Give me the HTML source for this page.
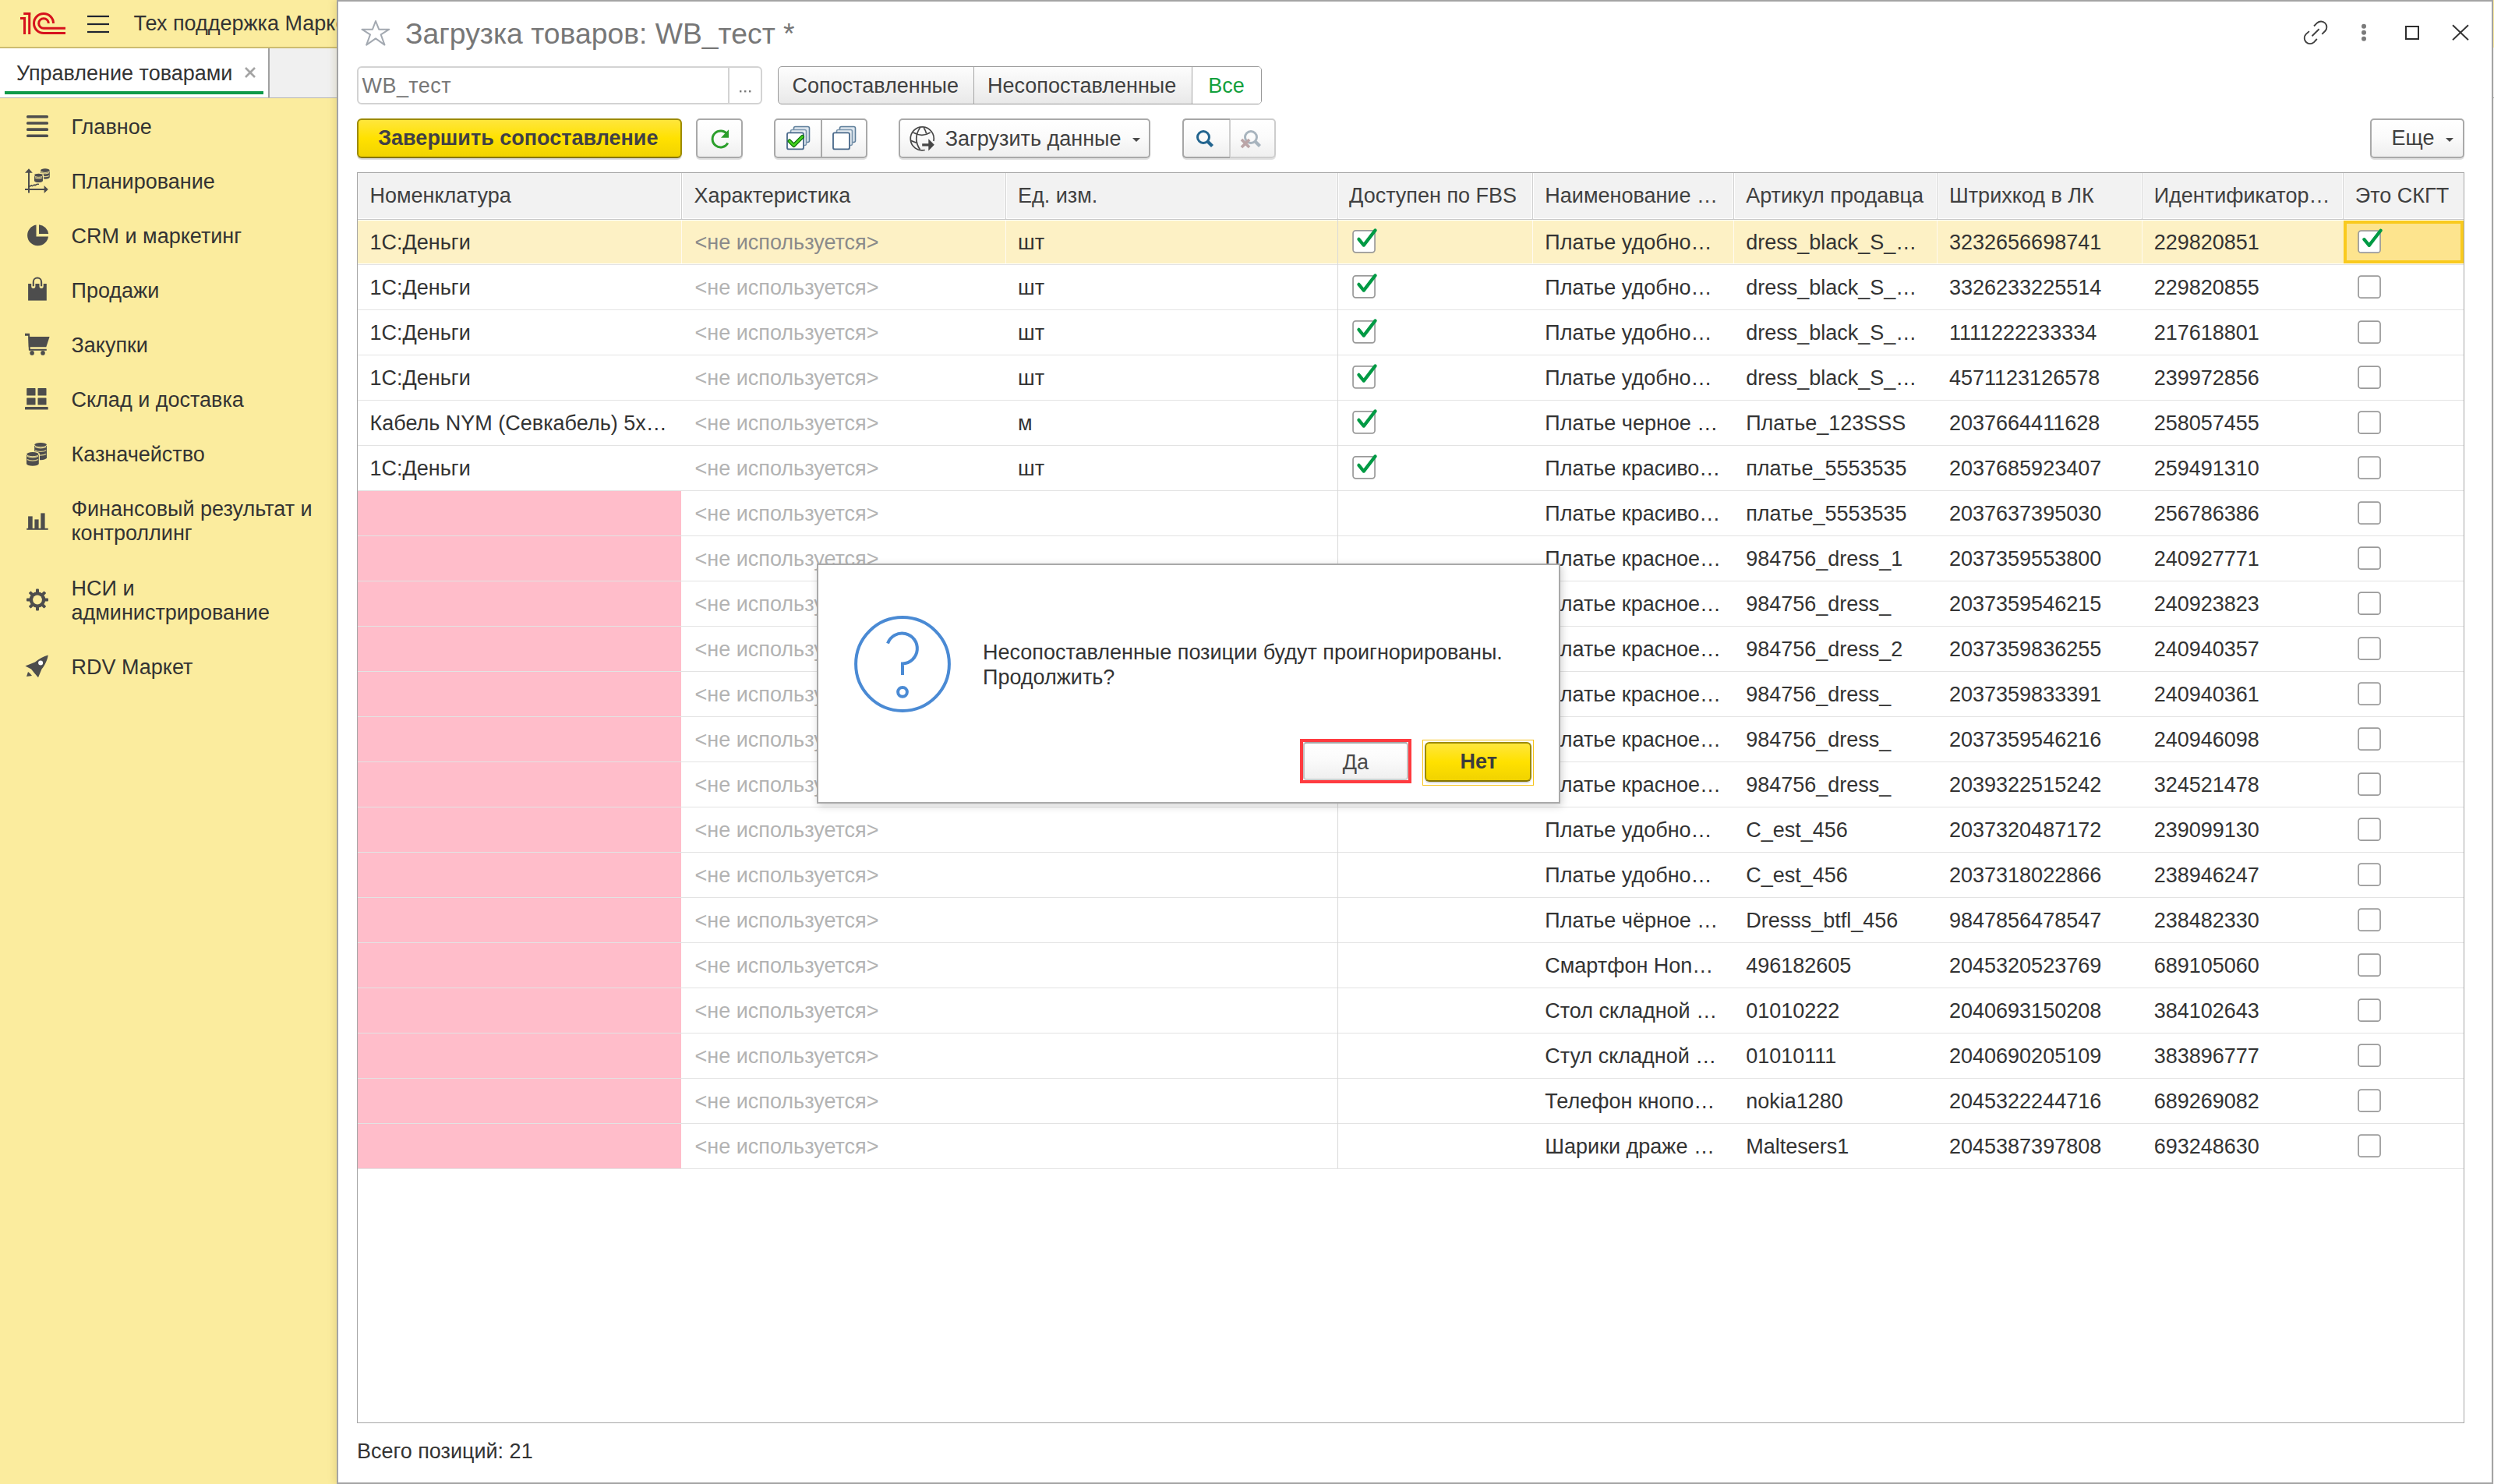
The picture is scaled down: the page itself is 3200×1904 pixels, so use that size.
<!DOCTYPE html><html><head><meta charset="utf-8"><style>
*{box-sizing:border-box;margin:0;padding:0}
html,body{width:3200px;height:1904px;overflow:hidden}
body{position:relative;background:#FBEC9E;font-family:"Liberation Sans",sans-serif;color:#333}
.t{position:absolute;white-space:nowrap}
.abs{position:absolute}
svg{position:absolute;overflow:visible}
.btn{position:absolute;border:2px solid #a9a9a9;border-radius:5px;background:linear-gradient(#ffffff 0%,#fbfbfb 45%,#efefef 100%);box-shadow:0 2px 0 rgba(0,0,0,0.12)}
.ybtn{position:absolute;border:2px solid #9c8a00;border-bottom-color:#857400;border-radius:6px;background:linear-gradient(#ffe63c 0%,#ffe100 50%,#f1d300 100%);box-shadow:0 2px 1px rgba(0,0,0,0.15)}
</style></head><body>
<div class="abs" style="left:0;top:60px;width:432px;height:2px;background:#cdbc70"></div>
<svg style="left:0;top:0" width="160" height="60" viewBox="0 0 160 60">
<g fill="#d6121d">
<rect x="26" y="22" width="7" height="3"/><rect x="30" y="22" width="3" height="22"/>
<rect x="30.2" y="16" width="9" height="3"/><rect x="36.2" y="16" width="3" height="28"/>
</g>
<g fill="none" stroke="#d6121d" stroke-width="3">
<path d="M68.5 30 A12.5 12.5 0 1 0 56 42.5 H84"/>
<path d="M62.3 30 A6.3 6.3 0 1 0 56 36.3 H84"/>
</g>
<g stroke="#1f2430" stroke-width="2.2">
<line x1="112" y1="21" x2="140" y2="21"/><line x1="112" y1="31" x2="140" y2="31"/><line x1="112" y1="41" x2="140" y2="41"/>
</g>
</svg>
<div class="t" style="left:171.50px;top:15.34px;font-size:27px;line-height:31px;color:#333;font-weight:normal;">Тех поддержка Маркетплейсы</div>
<div class="abs" style="left:0;top:62px;width:432px;height:64px;background:#f0f0f0;border-bottom:1px solid #b4b4b4"></div>
<div class="abs" style="left:0;top:62px;width:346px;height:63px;background:#fff;border-right:2px solid #a0a0a0"></div>
<div class="abs" style="left:6px;top:117px;width:332px;height:4px;background:#0f9a49"></div>
<div class="t" style="left:21.00px;top:79.24px;font-size:27px;line-height:31px;color:#333;font-weight:normal;">Управление товарами</div>
<svg style="left:313px;top:85px" width="16" height="16"><g stroke="#a4a4a4" stroke-width="2.6"><line x1="2" y1="2" x2="14" y2="14"/><line x1="14" y1="2" x2="2" y2="14"/></g></svg>
<div class="t" style="left:91.50px;top:147.54px;font-size:27px;line-height:31px;color:#333;font-weight:normal;">Главное</div>
<div class="t" style="left:91.50px;top:217.84px;font-size:27px;line-height:31px;color:#333;font-weight:normal;">Планирование</div>
<div class="t" style="left:91.50px;top:287.84px;font-size:27px;line-height:31px;color:#333;font-weight:normal;">CRM и маркетинг</div>
<div class="t" style="left:91.50px;top:358.24px;font-size:27px;line-height:31px;color:#333;font-weight:normal;">Продажи</div>
<div class="t" style="left:91.50px;top:427.84px;font-size:27px;line-height:31px;color:#333;font-weight:normal;">Закупки</div>
<div class="t" style="left:91.50px;top:498.24px;font-size:27px;line-height:31px;color:#333;font-weight:normal;">Склад и доставка</div>
<div class="t" style="left:91.50px;top:567.64px;font-size:27px;line-height:31px;color:#333;font-weight:normal;">Казначейство</div>
<div class="t" style="left:91.50px;top:637.54px;font-size:27px;line-height:31px;color:#333;font-weight:normal;">Финансовый результат и</div>
<div class="t" style="left:91.50px;top:668.54px;font-size:27px;line-height:31px;color:#333;font-weight:normal;">контроллинг</div>
<div class="t" style="left:91.50px;top:739.64px;font-size:27px;line-height:31px;color:#333;font-weight:normal;">НСИ и</div>
<div class="t" style="left:91.50px;top:770.64px;font-size:27px;line-height:31px;color:#333;font-weight:normal;">администрирование</div>
<div class="t" style="left:91.50px;top:841.24px;font-size:27px;line-height:31px;color:#333;font-weight:normal;">RDV Маркет</div>
<svg style="left:0;top:0" width="80" height="900">
<g fill="#4d4d4d">
<rect x="34" y="148" width="28" height="3.6" rx="1.5"/><rect x="34" y="156.2" width="28" height="3.6" rx="1.5"/>
<rect x="34" y="164.3" width="28" height="3.6" rx="1.5"/><rect x="34" y="172.4" width="28" height="3.6" rx="1.5"/>
</g>
<g stroke="#4d4d4d" stroke-width="2" fill="none">
<path d="M37 247.5 V220.5 M32 243 H57.5"/><path d="M37.8 239.2 l2.6 -1.2 l1 0.6 l2.6 -1.5 l1 0.6 l2.6 -1.5 h2.4" stroke-width="1.6"/>
</g>
<g fill="#4d4d4d">
<path d="M32 221.8 L37 216.2 L41.8 221.8 Z"/><path d="M56.6 238 L61.8 243 L56.6 248 Z"/>
</g>
<path d="M52.0 218.8 A5.9 2.6 0 0 1 63.8 218.8 V227.20000000000002 A5.9 2.6 0 0 1 52.0 227.20000000000002 Z" fill="#4d4d4d"/><path d="M52.0 218.8 A5.9 2.6 0 0 0 63.8 218.8" fill="none" stroke="#FBEC9E" stroke-width="0.9"/><path d="M52.8 221.5 A5.9 2.6 0 0 0 63.0 221.5" fill="none" stroke="#d9cc8a" stroke-width="1.3"/><path d="M52.8 225.4 A5.9 2.6 0 0 0 63.0 225.4" fill="none" stroke="#d9cc8a" stroke-width="1.3"/><path d="M44.0 225 A5.5 2.3 0 0 1 55.0 225 V231.8 A5.5 2.3 0 0 1 44.0 231.8 Z" fill="none" stroke="#FBEC9E" stroke-width="2.4"/><path d="M44.0 225 A5.5 2.3 0 0 1 55.0 225 V231.8 A5.5 2.3 0 0 1 44.0 231.8 Z" fill="#4d4d4d"/><path d="M44.0 225 A5.5 2.3 0 0 0 55.0 225" fill="none" stroke="#FBEC9E" stroke-width="0.9"/><path d="M44.8 227.79999999999998 A5.5 2.3 0 0 0 54.2 227.79999999999998" fill="none" stroke="#d9cc8a" stroke-width="1.3"/>
<g fill="#4d4d4d">
<path d="M46.5 288.5 A13.5 13.5 0 1 0 62 303.5 H46.5 Z"/>
<path d="M50 288.2 A13.5 13.5 0 0 1 62.2 300 H50 Z"/>
</g>
<rect x="36.1" y="364" width="23.7" height="21.6" fill="#4d4d4d"/>
<path d="M42.8 367.3 V361.7 A5.15 5.15 0 0 1 53.1 361.7 V367.3" stroke="#FBEC9E" stroke-width="5.2" fill="none" stroke-linecap="round"/>
<path d="M42.8 367.3 V361.7 A5.15 5.15 0 0 1 53.1 361.7 V367.3" stroke="#4d4d4d" stroke-width="2.1" fill="none"/>
<g fill="#4d4d4d">
<rect x="32" y="427.8" width="5.9" height="3"/><path d="M36 428 h2 l0.9 21.6 h-2 z"/>
<path d="M36.6 432.1 H63.6 L59.3 445.3 H36.8 Z"/><rect x="37.5" y="447.8" width="22.3" height="2"/>
<circle cx="41.1" cy="452.9" r="2.8"/><circle cx="55" cy="452.9" r="2.8"/>
</g>
<g fill="#4d4d4d">
<rect x="34.2" y="498.1" width="11.3" height="9.4" rx="0.6"/><rect x="48.5" y="498.1" width="11" height="9.4" rx="0.6"/>
<rect x="34.2" y="510.5" width="11.3" height="9.1" rx="0.6"/><rect x="48.5" y="510.5" width="11" height="9.1" rx="0.6"/>
<rect x="32" y="522.1" width="29.7" height="3.5" rx="0.6"/>
</g>
<path d="M44.2 570.8 A7.9 2.9 0 0 1 60.0 570.8 V587.3 A7.9 2.9 0 0 1 44.2 587.3 Z" fill="#4d4d4d"/><path d="M44.2 570.8 A7.9 2.9 0 0 0 60.0 570.8" fill="none" stroke="#FBEC9E" stroke-width="0.9"/><path d="M45.0 573.2 A7.9 2.9 0 0 0 59.2 573.2" fill="none" stroke="#d9cc8a" stroke-width="1.3"/><path d="M45.0 577.8000000000001 A7.9 2.9 0 0 0 59.2 577.8000000000001" fill="none" stroke="#d9cc8a" stroke-width="1.3"/><path d="M45.0 582.5000000000001 A7.9 2.9 0 0 0 59.2 582.5000000000001" fill="none" stroke="#d9cc8a" stroke-width="1.3"/><path d="M34.0 582.9 A7.9 2.8 0 0 1 49.8 582.9 V594.9 A7.9 2.8 0 0 1 34.0 594.9 Z" fill="none" stroke="#FBEC9E" stroke-width="2.4"/><path d="M34.0 582.9 A7.9 2.8 0 0 1 49.8 582.9 V594.9 A7.9 2.8 0 0 1 34.0 594.9 Z" fill="#4d4d4d"/><path d="M34.0 582.9 A7.9 2.8 0 0 0 49.8 582.9" fill="none" stroke="#FBEC9E" stroke-width="0.9"/><path d="M34.8 585.2 A7.9 2.8 0 0 0 49.0 585.2" fill="none" stroke="#d9cc8a" stroke-width="1.3"/><path d="M34.8 589.5000000000001 A7.9 2.8 0 0 0 49.0 589.5000000000001" fill="none" stroke="#d9cc8a" stroke-width="1.3"/>
<g fill="#4d4d4d">
<rect x="36.1" y="662.4" width="5.6" height="16"/><rect x="44.4" y="666.4" width="5.2" height="12"/><rect x="52.3" y="658.4" width="5.3" height="20"/>
<rect x="34.2" y="677.8" width="27.5" height="2"/>
</g>
<g transform="translate(48,769.5)" fill="#4d4d4d"><circle r="10.3"/><rect x="-2" y="-14" width="4" height="6" rx="1" transform="rotate(0)"/><rect x="-2" y="-14" width="4" height="6" rx="1" transform="rotate(45)"/><rect x="-2" y="-14" width="4" height="6" rx="1" transform="rotate(90)"/><rect x="-2" y="-14" width="4" height="6" rx="1" transform="rotate(135)"/><rect x="-2" y="-14" width="4" height="6" rx="1" transform="rotate(180)"/><rect x="-2" y="-14" width="4" height="6" rx="1" transform="rotate(225)"/><rect x="-2" y="-14" width="4" height="6" rx="1" transform="rotate(270)"/><rect x="-2" y="-14" width="4" height="6" rx="1" transform="rotate(315)"/><circle r="5.9" fill="#FBEC9E"/></g>
<g fill="#4d4d4d">
<path d="M61.7 840.4 C56 842 50 845 45 849.5 L32.4 854.4 L40 858.5 L44.5 864 L49 869.3 L53.5 858.5 C58 853 61 846 61.7 840.4 Z"/>
<path d="M34 868 l2 -6 l2.5 2 l2.5 3 z"/>
</g>
<circle cx="52.1" cy="850.5" r="3" fill="#fff"/>
</svg>
<div class="abs" style="left:3197px;top:61px;width:3px;height:1843px;background:#f4f4f4"></div>
<div class="abs" style="left:3197px;top:125px;width:3px;height:1px;background:#a0a0a0"></div>
<div class="abs" style="left:432px;top:0;width:2767px;height:1904px;background:#fff;border:2px solid #a4a4a4;box-shadow:-4px 0 8px rgba(120,100,0,0.12)"></div>
<svg style="left:0;top:0" width="520" height="70"><path d="M482 27 L486.2 37.7 L499.3 37.7 L488.7 44.3 L493.5 57.6 L482 49.4 L470.2 57.6 L475 44.3 L464.4 37.7 L478 37.7 Z" fill="none" stroke="#a3a9b1" stroke-width="2" stroke-linejoin="round"/></svg>
<div class="t" style="left:520.00px;top:21.58px;font-size:37.3px;line-height:43px;color:#777;font-weight:normal;">Загрузка товаров: WB_тест *</div>
<svg style="left:2940px;top:15px" width="240" height="50" viewBox="2940 15 240 50">
<g fill="none" stroke="#404040" stroke-width="1.9">
<path d="M2969 33.5 L2973.04 29.44 A7.3 7.3 0 0 1 2983.36 39.76 L2979.3 43.9"/>
<path d="M2966.5 46.3 L2975.6 37.3"/>
<path d="M2962.9 40.1 L2958.74 43.84 A7.3 7.3 0 0 0 2969.06 54.16 L2972.8 50"/>
</g>
<g fill="#7a7a7a"><circle cx="3033" cy="33.8" r="3"/><circle cx="3033" cy="41.8" r="3"/><circle cx="3033" cy="49.8" r="3"/></g>
<rect x="3087" y="34" width="16" height="16" fill="none" stroke="#2e2e2e" stroke-width="2"/>
<g stroke="#333" stroke-width="1.9"><line x1="3147" y1="32.3" x2="3167" y2="51.2"/><line x1="3167" y1="32.3" x2="3147" y2="51.2"/></g>
</svg>
<div class="abs" style="left:458px;top:85px;width:520px;height:49px;border:2px solid #d3d3d3;border-radius:6px;background:#fff"></div>
<div class="abs" style="left:934px;top:86px;width:2px;height:47px;background:#d3d3d3"></div>
<div class="t" style="left:464.50px;top:94.84px;font-size:27px;line-height:31px;color:#777;font-weight:normal;letter-spacing:0.45px">WB_тест</div>
<svg style="left:945px;top:110px" width="24" height="10"><g fill="#7a7a7a"><rect x="4" y="6" width="2.4" height="2.4"/><rect x="10" y="6" width="2.4" height="2.4"/><rect x="16" y="6" width="2.4" height="2.4"/></g></svg>
<div class="abs" style="left:998px;top:85px;width:621px;height:49px;border:1px solid #999;border-radius:5px;background:linear-gradient(#fdfdfd,#e9e9e9);overflow:hidden"><div class="abs" style="left:530px;top:0;width:90px;height:47px;background:#fff"></div><div class="abs" style="left:250px;top:0;width:1px;height:47px;background:#a6a6a6"></div><div class="abs" style="left:530px;top:0;width:1px;height:47px;background:#a6a6a6"></div></div>
<div class="t" style="left:1016.50px;top:94.94px;font-size:27px;line-height:31px;color:#404040;font-weight:normal;">Сопоставленные</div>
<div class="t" style="left:1267.00px;top:94.94px;font-size:27px;line-height:31px;color:#404040;font-weight:normal;">Несопоставленные</div>
<div class="t" style="left:1550.20px;top:94.94px;font-size:27px;line-height:31px;color:#12a03c;font-weight:normal;">Все</div>
<div class="ybtn" style="left:458px;top:152px;width:417px;height:51px"></div>
<div class="t" style="left:485.20px;top:161.84px;font-size:27px;line-height:31px;color:#3f3f46;font-weight:bold;">Завершить сопоставление</div>
<div class="btn" style="left:893px;top:152px;width:60px;height:51px"></div>
<svg style="left:900px;top:155px" width="50" height="45" viewBox="900 155 50 45">
<path d="M933.3 172.5 A10.5 10.5 0 1 0 933.8 183.5" fill="none" stroke="#2c9f2c" stroke-width="3"/>
<path d="M935 166.2 L935 176.8 L925 176.8 Z" fill="#2c9f2c"/>
</svg>
<div class="btn" style="left:993px;top:152px;width:120px;height:51px"></div>
<div class="abs" style="left:1053px;top:154px;width:2px;height:47px;background:#a9a9a9"></div>
<svg style="left:990px;top:150px" width="130" height="55" viewBox="990 150 130 55"><rect x="1018.5" y="162.5" width="20" height="20" rx="2" fill="#dde6ee" stroke="#5d7d99" stroke-width="1.6"/><rect x="1014.5" y="166.5" width="20" height="20" rx="2" fill="#e8eef3" stroke="#7a95ad" stroke-width="1.6"/><rect x="1010" y="170.4" width="21" height="21" rx="2" fill="#fff" stroke="#48688a" stroke-width="1.8"/><path d="M1013 181 l5.5 5.5 l11 -11" fill="none" stroke="#0b6b0b" stroke-width="5" stroke-linejoin="round" stroke-linecap="round"/><path d="M1013 181 l5.5 5.5 l11 -11" fill="none" stroke="#43d11f" stroke-width="2.6" stroke-linejoin="round" stroke-linecap="round"/><rect x="1077.5" y="162.5" width="20" height="20" rx="2" fill="#dde6ee" stroke="#5d7d99" stroke-width="1.6"/><rect x="1073.5" y="166.5" width="20" height="20" rx="2" fill="#e8eef3" stroke="#7a95ad" stroke-width="1.6"/><rect x="1069" y="170.4" width="21" height="21" rx="2" fill="#fff" stroke="#48688a" stroke-width="1.8"/></svg>
<div class="btn" style="left:1153px;top:152px;width:323px;height:51px"></div>
<svg style="left:1160px;top:155px" width="50" height="45" viewBox="1160 155 50 45">
<g fill="none" stroke="#474747" stroke-width="1.7">
<path d="M1186.7 192.5 A15 15 0 1 1 1197.9 181"/>
<path d="M1171.6 170.1 Q1183 176.5 1193.7 170.1"/>
<path d="M1180.5 163.9 Q1171 178 1180.5 192"/>
<path d="M1185.3 163.9 Q1187.5 167 1188.6 171.2"/>
<path d="M1168.6 180.4 L1175.9 183.3"/>
</g>
<path d="M1183.2 184.3 H1191.3 V178.2 L1198.8 185.8 L1191.3 193.6 V187.6 H1183.2 Z" fill="#474747"/>
</svg>
<div class="t" style="left:1212.70px;top:162.94px;font-size:27px;line-height:31px;color:#404040;font-weight:normal;">Загрузить данные</div>
<svg style="left:1450px;top:174px" width="16" height="10"><path d="M3 3 h10 l-5 5z" fill="#4a4a4a"/></svg>
<div class="btn" style="left:1517px;top:152px;width:120px;height:51px;border-color:#cdcdcd"></div>
<div class="abs" style="left:1517px;top:152px;width:61px;height:51px;border:2px solid #a6a6a6;border-right:none;border-radius:5px 0 0 5px"></div>
<div class="abs" style="left:1577px;top:154px;width:2px;height:47px;background:#cfcfcf"></div>
<svg style="left:1520px;top:155px" width="110" height="45" viewBox="1520 155 110 45">
<circle cx="1544" cy="176" r="7.5" fill="none" stroke="#23658f" stroke-width="3"/>
<path d="M1549 181 L1555.5 187.5" stroke="#23658f" stroke-width="4.2"/>
<circle cx="1605" cy="176" r="7.5" fill="none" stroke="#a8b4be" stroke-width="3"/>
<path d="M1610 181 L1616.5 187.5" stroke="#a8b4be" stroke-width="4.2"/>
<path d="M1593 179 L1603 189 M1603 179 L1593 189" stroke="#bba5a7" stroke-width="3.8"/>
</svg>
<div class="btn" style="left:3041px;top:152px;width:121px;height:51px"></div>
<div class="t" style="left:3068.50px;top:161.84px;font-size:27px;line-height:31px;color:#404040;font-weight:normal;">Еще</div>
<svg style="left:3135px;top:174px" width="16" height="10"><path d="M3 3 h10 l-5 5z" fill="#4a4a4a"/></svg>
<div class="abs" style="left:458px;top:221px;width:2704px;height:1605px;border:1px solid #a6a6a6;background:#fff"></div>
<div class="abs" style="left:459px;top:222px;width:2702px;height:59px;background:#f2f2f2"></div>
<div class="abs" style="left:459px;top:280px;width:2702px;height:3px;background:#fff;border-top:0;"></div>
<div class="abs" style="left:873px;top:222px;width:3px;height:58px;background:#fff"></div>
<div class="abs" style="left:874px;top:222px;width:1px;height:59px;background:#cfcfcf"></div>
<div class="abs" style="left:1289px;top:222px;width:3px;height:58px;background:#fff"></div>
<div class="abs" style="left:1290px;top:222px;width:1px;height:59px;background:#cfcfcf"></div>
<div class="abs" style="left:1715px;top:222px;width:3px;height:58px;background:#fff"></div>
<div class="abs" style="left:1716px;top:222px;width:1px;height:59px;background:#cfcfcf"></div>
<div class="abs" style="left:1965px;top:222px;width:3px;height:58px;background:#fff"></div>
<div class="abs" style="left:1966px;top:222px;width:1px;height:59px;background:#cfcfcf"></div>
<div class="abs" style="left:2223px;top:222px;width:3px;height:58px;background:#fff"></div>
<div class="abs" style="left:2224px;top:222px;width:1px;height:59px;background:#cfcfcf"></div>
<div class="abs" style="left:2484px;top:222px;width:3px;height:58px;background:#fff"></div>
<div class="abs" style="left:2485px;top:222px;width:1px;height:59px;background:#cfcfcf"></div>
<div class="abs" style="left:2747px;top:222px;width:3px;height:58px;background:#fff"></div>
<div class="abs" style="left:2748px;top:222px;width:1px;height:59px;background:#cfcfcf"></div>
<div class="abs" style="left:3005px;top:222px;width:3px;height:58px;background:#fff"></div>
<div class="abs" style="left:3006px;top:222px;width:1px;height:59px;background:#cfcfcf"></div>
<div class="abs" style="left:459px;top:281px;width:2702px;height:1px;background:#c8c8c8"></div>
<div class="t" style="left:474.50px;top:236.14px;font-size:27px;line-height:31px;color:#404040;font-weight:normal;">Номенклатура</div>
<div class="t" style="left:890.50px;top:236.14px;font-size:27px;line-height:31px;color:#404040;font-weight:normal;">Характеристика</div>
<div class="t" style="left:1306.00px;top:236.14px;font-size:27px;line-height:31px;color:#404040;font-weight:normal;">Ед. изм.</div>
<div class="t" style="left:1731.10px;top:236.14px;font-size:27px;line-height:31px;color:#404040;font-weight:normal;">Доступен по FBS</div>
<div class="t" style="left:1982.30px;top:236.14px;font-size:27px;line-height:31px;color:#404040;font-weight:normal;">Наименование …</div>
<div class="t" style="left:2240.20px;top:236.14px;font-size:27px;line-height:31px;color:#404040;font-weight:normal;">Артикул продавца</div>
<div class="t" style="left:2501.00px;top:236.14px;font-size:27px;line-height:31px;color:#404040;font-weight:normal;">Штрихкод в ЛК</div>
<div class="t" style="left:2763.70px;top:236.14px;font-size:27px;line-height:31px;color:#404040;font-weight:normal;">Идентификатор…</div>
<div class="t" style="left:3021.80px;top:236.14px;font-size:27px;line-height:31px;color:#404040;font-weight:normal;">Это СКГТ</div>
<div class="abs" style="left:459px;top:283px;width:2702px;height:55px;background:#fdf1c5"></div>
<div class="abs" style="left:874px;top:283px;width:1px;height:55px;background:#fffaf0"></div>
<div class="abs" style="left:1290px;top:283px;width:1px;height:55px;background:#fffaf0"></div>
<div class="abs" style="left:1716px;top:283px;width:1px;height:55px;background:#fffaf0"></div>
<div class="abs" style="left:1966px;top:283px;width:1px;height:55px;background:#fffaf0"></div>
<div class="abs" style="left:2224px;top:283px;width:1px;height:55px;background:#fffaf0"></div>
<div class="abs" style="left:2485px;top:283px;width:1px;height:55px;background:#fffaf0"></div>
<div class="abs" style="left:2748px;top:283px;width:1px;height:55px;background:#fffaf0"></div>
<div class="abs" style="left:3007px;top:283px;width:154px;height:55px;background:#fde48e;border:4px solid #f9ca1e"></div>
<div class="abs" style="left:459px;top:339px;width:2702px;height:1px;background:#e3e3e3"></div>
<div class="t" style="left:474.50px;top:295.64px;font-size:27px;line-height:31px;color:#333;font-weight:normal;">1С:Деньги</div>
<div class="t" style="left:891.50px;top:295.64px;font-size:27px;line-height:31px;color:#8a8a8a;font-weight:normal;">&lt;не используется&gt;</div>
<div class="t" style="left:1306.00px;top:295.64px;font-size:27px;line-height:31px;color:#333;font-weight:normal;">шт</div>
<div class="t" style="left:1982.30px;top:295.64px;font-size:27px;line-height:31px;color:#333;font-weight:normal;">Платье удобно…</div>
<div class="t" style="left:2240.20px;top:295.64px;font-size:27px;line-height:31px;color:#333;font-weight:normal;">dress_black_S_…</div>
<div class="t" style="left:2501.00px;top:295.64px;font-size:27px;line-height:31px;color:#333;font-weight:normal;">3232656698741</div>
<div class="t" style="left:2763.70px;top:295.64px;font-size:27px;line-height:31px;color:#333;font-weight:normal;">229820851</div>
<div class="abs" style="left:459px;top:397px;width:2702px;height:1px;background:#e3e3e3"></div>
<div class="t" style="left:474.50px;top:353.64px;font-size:27px;line-height:31px;color:#333;font-weight:normal;">1С:Деньги</div>
<div class="t" style="left:891.50px;top:353.64px;font-size:27px;line-height:31px;color:#b3b3b3;font-weight:normal;">&lt;не используется&gt;</div>
<div class="t" style="left:1306.00px;top:353.64px;font-size:27px;line-height:31px;color:#333;font-weight:normal;">шт</div>
<div class="t" style="left:1982.30px;top:353.64px;font-size:27px;line-height:31px;color:#333;font-weight:normal;">Платье удобно…</div>
<div class="t" style="left:2240.20px;top:353.64px;font-size:27px;line-height:31px;color:#333;font-weight:normal;">dress_black_S_…</div>
<div class="t" style="left:2501.00px;top:353.64px;font-size:27px;line-height:31px;color:#333;font-weight:normal;">3326233225514</div>
<div class="t" style="left:2763.70px;top:353.64px;font-size:27px;line-height:31px;color:#333;font-weight:normal;">229820855</div>
<div class="abs" style="left:459px;top:455px;width:2702px;height:1px;background:#e3e3e3"></div>
<div class="t" style="left:474.50px;top:411.64px;font-size:27px;line-height:31px;color:#333;font-weight:normal;">1С:Деньги</div>
<div class="t" style="left:891.50px;top:411.64px;font-size:27px;line-height:31px;color:#b3b3b3;font-weight:normal;">&lt;не используется&gt;</div>
<div class="t" style="left:1306.00px;top:411.64px;font-size:27px;line-height:31px;color:#333;font-weight:normal;">шт</div>
<div class="t" style="left:1982.30px;top:411.64px;font-size:27px;line-height:31px;color:#333;font-weight:normal;">Платье удобно…</div>
<div class="t" style="left:2240.20px;top:411.64px;font-size:27px;line-height:31px;color:#333;font-weight:normal;">dress_black_S_…</div>
<div class="t" style="left:2501.00px;top:411.64px;font-size:27px;line-height:31px;color:#333;font-weight:normal;">1111222233334</div>
<div class="t" style="left:2763.70px;top:411.64px;font-size:27px;line-height:31px;color:#333;font-weight:normal;">217618801</div>
<div class="abs" style="left:459px;top:513px;width:2702px;height:1px;background:#e3e3e3"></div>
<div class="t" style="left:474.50px;top:469.64px;font-size:27px;line-height:31px;color:#333;font-weight:normal;">1С:Деньги</div>
<div class="t" style="left:891.50px;top:469.64px;font-size:27px;line-height:31px;color:#b3b3b3;font-weight:normal;">&lt;не используется&gt;</div>
<div class="t" style="left:1306.00px;top:469.64px;font-size:27px;line-height:31px;color:#333;font-weight:normal;">шт</div>
<div class="t" style="left:1982.30px;top:469.64px;font-size:27px;line-height:31px;color:#333;font-weight:normal;">Платье удобно…</div>
<div class="t" style="left:2240.20px;top:469.64px;font-size:27px;line-height:31px;color:#333;font-weight:normal;">dress_black_S_…</div>
<div class="t" style="left:2501.00px;top:469.64px;font-size:27px;line-height:31px;color:#333;font-weight:normal;">4571123126578</div>
<div class="t" style="left:2763.70px;top:469.64px;font-size:27px;line-height:31px;color:#333;font-weight:normal;">239972856</div>
<div class="abs" style="left:459px;top:571px;width:2702px;height:1px;background:#e3e3e3"></div>
<div class="t" style="left:474.50px;top:527.64px;font-size:27px;line-height:31px;color:#333;font-weight:normal;">Кабель NYM (Севкабель) 5х…</div>
<div class="t" style="left:891.50px;top:527.64px;font-size:27px;line-height:31px;color:#b3b3b3;font-weight:normal;">&lt;не используется&gt;</div>
<div class="t" style="left:1306.00px;top:527.64px;font-size:27px;line-height:31px;color:#333;font-weight:normal;">м</div>
<div class="t" style="left:1982.30px;top:527.64px;font-size:27px;line-height:31px;color:#333;font-weight:normal;">Платье черное …</div>
<div class="t" style="left:2240.20px;top:527.64px;font-size:27px;line-height:31px;color:#333;font-weight:normal;">Платье_123SSS</div>
<div class="t" style="left:2501.00px;top:527.64px;font-size:27px;line-height:31px;color:#333;font-weight:normal;">2037664411628</div>
<div class="t" style="left:2763.70px;top:527.64px;font-size:27px;line-height:31px;color:#333;font-weight:normal;">258057455</div>
<div class="abs" style="left:459px;top:629px;width:2702px;height:1px;background:#e3e3e3"></div>
<div class="t" style="left:474.50px;top:585.64px;font-size:27px;line-height:31px;color:#333;font-weight:normal;">1С:Деньги</div>
<div class="t" style="left:891.50px;top:585.64px;font-size:27px;line-height:31px;color:#b3b3b3;font-weight:normal;">&lt;не используется&gt;</div>
<div class="t" style="left:1306.00px;top:585.64px;font-size:27px;line-height:31px;color:#333;font-weight:normal;">шт</div>
<div class="t" style="left:1982.30px;top:585.64px;font-size:27px;line-height:31px;color:#333;font-weight:normal;">Платье красиво…</div>
<div class="t" style="left:2240.20px;top:585.64px;font-size:27px;line-height:31px;color:#333;font-weight:normal;">платье_5553535</div>
<div class="t" style="left:2501.00px;top:585.64px;font-size:27px;line-height:31px;color:#333;font-weight:normal;">2037685923407</div>
<div class="t" style="left:2763.70px;top:585.64px;font-size:27px;line-height:31px;color:#333;font-weight:normal;">259491310</div>
<div class="abs" style="left:459px;top:630px;width:415px;height:57px;background:#ffbdca"></div>
<div class="abs" style="left:459px;top:687px;width:2702px;height:1px;background:#e3e3e3"></div>
<div class="t" style="left:891.50px;top:643.64px;font-size:27px;line-height:31px;color:#b3b3b3;font-weight:normal;">&lt;не используется&gt;</div>
<div class="t" style="left:1982.30px;top:643.64px;font-size:27px;line-height:31px;color:#333;font-weight:normal;">Платье красиво…</div>
<div class="t" style="left:2240.20px;top:643.64px;font-size:27px;line-height:31px;color:#333;font-weight:normal;">платье_5553535</div>
<div class="t" style="left:2501.00px;top:643.64px;font-size:27px;line-height:31px;color:#333;font-weight:normal;">2037637395030</div>
<div class="t" style="left:2763.70px;top:643.64px;font-size:27px;line-height:31px;color:#333;font-weight:normal;">256786386</div>
<div class="abs" style="left:459px;top:688px;width:415px;height:57px;background:#ffbdca"></div>
<div class="abs" style="left:459px;top:745px;width:2702px;height:1px;background:#e3e3e3"></div>
<div class="t" style="left:891.50px;top:701.64px;font-size:27px;line-height:31px;color:#b3b3b3;font-weight:normal;">&lt;не используется&gt;</div>
<div class="t" style="left:1982.30px;top:701.64px;font-size:27px;line-height:31px;color:#333;font-weight:normal;">Платье красное…</div>
<div class="t" style="left:2240.20px;top:701.64px;font-size:27px;line-height:31px;color:#333;font-weight:normal;">984756_dress_1</div>
<div class="t" style="left:2501.00px;top:701.64px;font-size:27px;line-height:31px;color:#333;font-weight:normal;">2037359553800</div>
<div class="t" style="left:2763.70px;top:701.64px;font-size:27px;line-height:31px;color:#333;font-weight:normal;">240927771</div>
<div class="abs" style="left:459px;top:746px;width:415px;height:57px;background:#ffbdca"></div>
<div class="abs" style="left:459px;top:803px;width:2702px;height:1px;background:#e3e3e3"></div>
<div class="t" style="left:891.50px;top:759.64px;font-size:27px;line-height:31px;color:#b3b3b3;font-weight:normal;">&lt;не используется&gt;</div>
<div class="t" style="left:1982.30px;top:759.64px;font-size:27px;line-height:31px;color:#333;font-weight:normal;">Платье красное…</div>
<div class="t" style="left:2240.20px;top:759.64px;font-size:27px;line-height:31px;color:#333;font-weight:normal;">984756_dress_</div>
<div class="t" style="left:2501.00px;top:759.64px;font-size:27px;line-height:31px;color:#333;font-weight:normal;">2037359546215</div>
<div class="t" style="left:2763.70px;top:759.64px;font-size:27px;line-height:31px;color:#333;font-weight:normal;">240923823</div>
<div class="abs" style="left:459px;top:804px;width:415px;height:57px;background:#ffbdca"></div>
<div class="abs" style="left:459px;top:861px;width:2702px;height:1px;background:#e3e3e3"></div>
<div class="t" style="left:891.50px;top:817.64px;font-size:27px;line-height:31px;color:#b3b3b3;font-weight:normal;">&lt;не используется&gt;</div>
<div class="t" style="left:1982.30px;top:817.64px;font-size:27px;line-height:31px;color:#333;font-weight:normal;">Платье красное…</div>
<div class="t" style="left:2240.20px;top:817.64px;font-size:27px;line-height:31px;color:#333;font-weight:normal;">984756_dress_2</div>
<div class="t" style="left:2501.00px;top:817.64px;font-size:27px;line-height:31px;color:#333;font-weight:normal;">2037359836255</div>
<div class="t" style="left:2763.70px;top:817.64px;font-size:27px;line-height:31px;color:#333;font-weight:normal;">240940357</div>
<div class="abs" style="left:459px;top:862px;width:415px;height:57px;background:#ffbdca"></div>
<div class="abs" style="left:459px;top:919px;width:2702px;height:1px;background:#e3e3e3"></div>
<div class="t" style="left:891.50px;top:875.64px;font-size:27px;line-height:31px;color:#b3b3b3;font-weight:normal;">&lt;не используется&gt;</div>
<div class="t" style="left:1982.30px;top:875.64px;font-size:27px;line-height:31px;color:#333;font-weight:normal;">Платье красное…</div>
<div class="t" style="left:2240.20px;top:875.64px;font-size:27px;line-height:31px;color:#333;font-weight:normal;">984756_dress_</div>
<div class="t" style="left:2501.00px;top:875.64px;font-size:27px;line-height:31px;color:#333;font-weight:normal;">2037359833391</div>
<div class="t" style="left:2763.70px;top:875.64px;font-size:27px;line-height:31px;color:#333;font-weight:normal;">240940361</div>
<div class="abs" style="left:459px;top:920px;width:415px;height:57px;background:#ffbdca"></div>
<div class="abs" style="left:459px;top:977px;width:2702px;height:1px;background:#e3e3e3"></div>
<div class="t" style="left:891.50px;top:933.64px;font-size:27px;line-height:31px;color:#b3b3b3;font-weight:normal;">&lt;не используется&gt;</div>
<div class="t" style="left:1982.30px;top:933.64px;font-size:27px;line-height:31px;color:#333;font-weight:normal;">Платье красное…</div>
<div class="t" style="left:2240.20px;top:933.64px;font-size:27px;line-height:31px;color:#333;font-weight:normal;">984756_dress_</div>
<div class="t" style="left:2501.00px;top:933.64px;font-size:27px;line-height:31px;color:#333;font-weight:normal;">2037359546216</div>
<div class="t" style="left:2763.70px;top:933.64px;font-size:27px;line-height:31px;color:#333;font-weight:normal;">240946098</div>
<div class="abs" style="left:459px;top:978px;width:415px;height:57px;background:#ffbdca"></div>
<div class="abs" style="left:459px;top:1035px;width:2702px;height:1px;background:#e3e3e3"></div>
<div class="t" style="left:891.50px;top:991.64px;font-size:27px;line-height:31px;color:#b3b3b3;font-weight:normal;">&lt;не используется&gt;</div>
<div class="t" style="left:1982.30px;top:991.64px;font-size:27px;line-height:31px;color:#333;font-weight:normal;">Платье красное…</div>
<div class="t" style="left:2240.20px;top:991.64px;font-size:27px;line-height:31px;color:#333;font-weight:normal;">984756_dress_</div>
<div class="t" style="left:2501.00px;top:991.64px;font-size:27px;line-height:31px;color:#333;font-weight:normal;">2039322515242</div>
<div class="t" style="left:2763.70px;top:991.64px;font-size:27px;line-height:31px;color:#333;font-weight:normal;">324521478</div>
<div class="abs" style="left:459px;top:1036px;width:415px;height:57px;background:#ffbdca"></div>
<div class="abs" style="left:459px;top:1093px;width:2702px;height:1px;background:#e3e3e3"></div>
<div class="t" style="left:891.50px;top:1049.64px;font-size:27px;line-height:31px;color:#b3b3b3;font-weight:normal;">&lt;не используется&gt;</div>
<div class="t" style="left:1982.30px;top:1049.64px;font-size:27px;line-height:31px;color:#333;font-weight:normal;">Платье удобно…</div>
<div class="t" style="left:2240.20px;top:1049.64px;font-size:27px;line-height:31px;color:#333;font-weight:normal;">C_est_456</div>
<div class="t" style="left:2501.00px;top:1049.64px;font-size:27px;line-height:31px;color:#333;font-weight:normal;">2037320487172</div>
<div class="t" style="left:2763.70px;top:1049.64px;font-size:27px;line-height:31px;color:#333;font-weight:normal;">239099130</div>
<div class="abs" style="left:459px;top:1094px;width:415px;height:57px;background:#ffbdca"></div>
<div class="abs" style="left:459px;top:1151px;width:2702px;height:1px;background:#e3e3e3"></div>
<div class="t" style="left:891.50px;top:1107.64px;font-size:27px;line-height:31px;color:#b3b3b3;font-weight:normal;">&lt;не используется&gt;</div>
<div class="t" style="left:1982.30px;top:1107.64px;font-size:27px;line-height:31px;color:#333;font-weight:normal;">Платье удобно…</div>
<div class="t" style="left:2240.20px;top:1107.64px;font-size:27px;line-height:31px;color:#333;font-weight:normal;">C_est_456</div>
<div class="t" style="left:2501.00px;top:1107.64px;font-size:27px;line-height:31px;color:#333;font-weight:normal;">2037318022866</div>
<div class="t" style="left:2763.70px;top:1107.64px;font-size:27px;line-height:31px;color:#333;font-weight:normal;">238946247</div>
<div class="abs" style="left:459px;top:1152px;width:415px;height:57px;background:#ffbdca"></div>
<div class="abs" style="left:459px;top:1209px;width:2702px;height:1px;background:#e3e3e3"></div>
<div class="t" style="left:891.50px;top:1165.64px;font-size:27px;line-height:31px;color:#b3b3b3;font-weight:normal;">&lt;не используется&gt;</div>
<div class="t" style="left:1982.30px;top:1165.64px;font-size:27px;line-height:31px;color:#333;font-weight:normal;">Платье чёрное …</div>
<div class="t" style="left:2240.20px;top:1165.64px;font-size:27px;line-height:31px;color:#333;font-weight:normal;">Dresss_btfl_456</div>
<div class="t" style="left:2501.00px;top:1165.64px;font-size:27px;line-height:31px;color:#333;font-weight:normal;">9847856478547</div>
<div class="t" style="left:2763.70px;top:1165.64px;font-size:27px;line-height:31px;color:#333;font-weight:normal;">238482330</div>
<div class="abs" style="left:459px;top:1210px;width:415px;height:57px;background:#ffbdca"></div>
<div class="abs" style="left:459px;top:1267px;width:2702px;height:1px;background:#e3e3e3"></div>
<div class="t" style="left:891.50px;top:1223.64px;font-size:27px;line-height:31px;color:#b3b3b3;font-weight:normal;">&lt;не используется&gt;</div>
<div class="t" style="left:1982.30px;top:1223.64px;font-size:27px;line-height:31px;color:#333;font-weight:normal;">Смартфон Hon…</div>
<div class="t" style="left:2240.20px;top:1223.64px;font-size:27px;line-height:31px;color:#333;font-weight:normal;">496182605</div>
<div class="t" style="left:2501.00px;top:1223.64px;font-size:27px;line-height:31px;color:#333;font-weight:normal;">2045320523769</div>
<div class="t" style="left:2763.70px;top:1223.64px;font-size:27px;line-height:31px;color:#333;font-weight:normal;">689105060</div>
<div class="abs" style="left:459px;top:1268px;width:415px;height:57px;background:#ffbdca"></div>
<div class="abs" style="left:459px;top:1325px;width:2702px;height:1px;background:#e3e3e3"></div>
<div class="t" style="left:891.50px;top:1281.64px;font-size:27px;line-height:31px;color:#b3b3b3;font-weight:normal;">&lt;не используется&gt;</div>
<div class="t" style="left:1982.30px;top:1281.64px;font-size:27px;line-height:31px;color:#333;font-weight:normal;">Стол складной …</div>
<div class="t" style="left:2240.20px;top:1281.64px;font-size:27px;line-height:31px;color:#333;font-weight:normal;">01010222</div>
<div class="t" style="left:2501.00px;top:1281.64px;font-size:27px;line-height:31px;color:#333;font-weight:normal;">2040693150208</div>
<div class="t" style="left:2763.70px;top:1281.64px;font-size:27px;line-height:31px;color:#333;font-weight:normal;">384102643</div>
<div class="abs" style="left:459px;top:1326px;width:415px;height:57px;background:#ffbdca"></div>
<div class="abs" style="left:459px;top:1383px;width:2702px;height:1px;background:#e3e3e3"></div>
<div class="t" style="left:891.50px;top:1339.64px;font-size:27px;line-height:31px;color:#b3b3b3;font-weight:normal;">&lt;не используется&gt;</div>
<div class="t" style="left:1982.30px;top:1339.64px;font-size:27px;line-height:31px;color:#333;font-weight:normal;">Стул складной …</div>
<div class="t" style="left:2240.20px;top:1339.64px;font-size:27px;line-height:31px;color:#333;font-weight:normal;">01010111</div>
<div class="t" style="left:2501.00px;top:1339.64px;font-size:27px;line-height:31px;color:#333;font-weight:normal;">2040690205109</div>
<div class="t" style="left:2763.70px;top:1339.64px;font-size:27px;line-height:31px;color:#333;font-weight:normal;">383896777</div>
<div class="abs" style="left:459px;top:1384px;width:415px;height:57px;background:#ffbdca"></div>
<div class="abs" style="left:459px;top:1441px;width:2702px;height:1px;background:#e3e3e3"></div>
<div class="t" style="left:891.50px;top:1397.64px;font-size:27px;line-height:31px;color:#b3b3b3;font-weight:normal;">&lt;не используется&gt;</div>
<div class="t" style="left:1982.30px;top:1397.64px;font-size:27px;line-height:31px;color:#333;font-weight:normal;">Телефон кнопо…</div>
<div class="t" style="left:2240.20px;top:1397.64px;font-size:27px;line-height:31px;color:#333;font-weight:normal;">nokia1280</div>
<div class="t" style="left:2501.00px;top:1397.64px;font-size:27px;line-height:31px;color:#333;font-weight:normal;">2045322244716</div>
<div class="t" style="left:2763.70px;top:1397.64px;font-size:27px;line-height:31px;color:#333;font-weight:normal;">689269082</div>
<div class="abs" style="left:459px;top:1442px;width:415px;height:57px;background:#ffbdca"></div>
<div class="abs" style="left:459px;top:1499px;width:2702px;height:1px;background:#e3e3e3"></div>
<div class="t" style="left:891.50px;top:1455.64px;font-size:27px;line-height:31px;color:#b3b3b3;font-weight:normal;">&lt;не используется&gt;</div>
<div class="t" style="left:1982.30px;top:1455.64px;font-size:27px;line-height:31px;color:#333;font-weight:normal;">Шарики драже …</div>
<div class="t" style="left:2240.20px;top:1455.64px;font-size:27px;line-height:31px;color:#333;font-weight:normal;">Maltesers1</div>
<div class="t" style="left:2501.00px;top:1455.64px;font-size:27px;line-height:31px;color:#333;font-weight:normal;">2045387397808</div>
<div class="t" style="left:2763.70px;top:1455.64px;font-size:27px;line-height:31px;color:#333;font-weight:normal;">693248630</div>
<div class="abs" style="left:1716px;top:282px;width:1px;height:1217px;background:#d9d9d9"></div>
<svg style="left:0;top:0" width="3200" height="1600"><rect x="1736.05" y="295.85" width="28" height="28" rx="3.5" fill="#fff" stroke="#9a9a9a" stroke-width="1.7"/><path d="M1743.4 306.8 L1749.8 314.6 L1764.6000000000001 295.4" fill="none" stroke="#009a44" stroke-width="4.2" stroke-linecap="round" stroke-linejoin="round"/><rect x="3026.0499999999997" y="296.15000000000003" width="28" height="28" rx="3.5" fill="#fff" stroke="#9a9a9a" stroke-width="1.7"/><path d="M3033.3999999999996 307.1 L3039.7999999999997 314.90000000000003 L3054.6 295.7" fill="none" stroke="#009a44" stroke-width="4.2" stroke-linecap="round" stroke-linejoin="round"/><rect x="1736.05" y="353.85" width="28" height="28" rx="3.5" fill="#fff" stroke="#9a9a9a" stroke-width="1.7"/><path d="M1743.4 364.8 L1749.8 372.6 L1764.6000000000001 353.4" fill="none" stroke="#009a44" stroke-width="4.2" stroke-linecap="round" stroke-linejoin="round"/><rect x="3026.0499999999997" y="354.15000000000003" width="28" height="28" rx="3.5" fill="#fff" stroke="#9a9a9a" stroke-width="1.7"/><rect x="1736.05" y="411.85" width="28" height="28" rx="3.5" fill="#fff" stroke="#9a9a9a" stroke-width="1.7"/><path d="M1743.4 422.8 L1749.8 430.6 L1764.6000000000001 411.4" fill="none" stroke="#009a44" stroke-width="4.2" stroke-linecap="round" stroke-linejoin="round"/><rect x="3026.0499999999997" y="412.15000000000003" width="28" height="28" rx="3.5" fill="#fff" stroke="#9a9a9a" stroke-width="1.7"/><rect x="1736.05" y="469.85" width="28" height="28" rx="3.5" fill="#fff" stroke="#9a9a9a" stroke-width="1.7"/><path d="M1743.4 480.8 L1749.8 488.6 L1764.6000000000001 469.4" fill="none" stroke="#009a44" stroke-width="4.2" stroke-linecap="round" stroke-linejoin="round"/><rect x="3026.0499999999997" y="470.15000000000003" width="28" height="28" rx="3.5" fill="#fff" stroke="#9a9a9a" stroke-width="1.7"/><rect x="1736.05" y="527.85" width="28" height="28" rx="3.5" fill="#fff" stroke="#9a9a9a" stroke-width="1.7"/><path d="M1743.4 538.8 L1749.8 546.6 L1764.6000000000001 527.4" fill="none" stroke="#009a44" stroke-width="4.2" stroke-linecap="round" stroke-linejoin="round"/><rect x="3026.0499999999997" y="528.15" width="28" height="28" rx="3.5" fill="#fff" stroke="#9a9a9a" stroke-width="1.7"/><rect x="1736.05" y="585.85" width="28" height="28" rx="3.5" fill="#fff" stroke="#9a9a9a" stroke-width="1.7"/><path d="M1743.4 596.8 L1749.8 604.6 L1764.6000000000001 585.4" fill="none" stroke="#009a44" stroke-width="4.2" stroke-linecap="round" stroke-linejoin="round"/><rect x="3026.0499999999997" y="586.15" width="28" height="28" rx="3.5" fill="#fff" stroke="#9a9a9a" stroke-width="1.7"/><rect x="3026.0499999999997" y="644.15" width="28" height="28" rx="3.5" fill="#fff" stroke="#9a9a9a" stroke-width="1.7"/><rect x="3026.0499999999997" y="702.15" width="28" height="28" rx="3.5" fill="#fff" stroke="#9a9a9a" stroke-width="1.7"/><rect x="3026.0499999999997" y="760.15" width="28" height="28" rx="3.5" fill="#fff" stroke="#9a9a9a" stroke-width="1.7"/><rect x="3026.0499999999997" y="818.15" width="28" height="28" rx="3.5" fill="#fff" stroke="#9a9a9a" stroke-width="1.7"/><rect x="3026.0499999999997" y="876.15" width="28" height="28" rx="3.5" fill="#fff" stroke="#9a9a9a" stroke-width="1.7"/><rect x="3026.0499999999997" y="934.15" width="28" height="28" rx="3.5" fill="#fff" stroke="#9a9a9a" stroke-width="1.7"/><rect x="3026.0499999999997" y="992.15" width="28" height="28" rx="3.5" fill="#fff" stroke="#9a9a9a" stroke-width="1.7"/><rect x="3026.0499999999997" y="1050.1499999999999" width="28" height="28" rx="3.5" fill="#fff" stroke="#9a9a9a" stroke-width="1.7"/><rect x="3026.0499999999997" y="1108.1499999999999" width="28" height="28" rx="3.5" fill="#fff" stroke="#9a9a9a" stroke-width="1.7"/><rect x="3026.0499999999997" y="1166.1499999999999" width="28" height="28" rx="3.5" fill="#fff" stroke="#9a9a9a" stroke-width="1.7"/><rect x="3026.0499999999997" y="1224.1499999999999" width="28" height="28" rx="3.5" fill="#fff" stroke="#9a9a9a" stroke-width="1.7"/><rect x="3026.0499999999997" y="1282.1499999999999" width="28" height="28" rx="3.5" fill="#fff" stroke="#9a9a9a" stroke-width="1.7"/><rect x="3026.0499999999997" y="1340.1499999999999" width="28" height="28" rx="3.5" fill="#fff" stroke="#9a9a9a" stroke-width="1.7"/><rect x="3026.0499999999997" y="1398.1499999999999" width="28" height="28" rx="3.5" fill="#fff" stroke="#9a9a9a" stroke-width="1.7"/><rect x="3026.0499999999997" y="1456.1499999999999" width="28" height="28" rx="3.5" fill="#fff" stroke="#9a9a9a" stroke-width="1.7"/></svg>
<div class="t" style="left:457.90px;top:1847.24px;font-size:27px;line-height:31px;color:#333;font-weight:normal;">Всего позиций: 21</div>
<div class="abs" style="left:1048px;top:723px;width:954px;height:308px;background:#fff;border:2px solid #a9a9a9;box-shadow:2px 3px 10px rgba(0,0,0,0.18)"></div>
<svg style="left:1090px;top:785px" width="140" height="135" viewBox="1090 785 140 135">
<g fill="none" stroke="#4a8ad4" stroke-width="4">
<circle cx="1158" cy="852" r="59.9"/>
<path d="M1139 825.5 A19.5 19.5 0 1 1 1158 851.5 V866"/>
<circle cx="1158" cy="887.8" r="5.9"/>
</g></svg>
<div class="t" style="left:1261.00px;top:821.84px;font-size:27px;line-height:31px;color:#333;font-weight:normal;">Несопоставленные позиции будут проигнорированы.</div>
<div class="t" style="left:1261.00px;top:853.84px;font-size:27px;line-height:31px;color:#333;font-weight:normal;">Продолжить?</div>
<div class="abs" style="left:1668px;top:948px;width:143px;height:57px;border:4px solid #ff3b40"></div>
<div class="btn" style="left:1672px;top:952px;width:135px;height:49px;border-radius:4px;box-shadow:none;border-color:#a8a8a8 #c4c4c4 #cfcfcf #c4c4c4"></div>
<div class="t" style="left:1722.70px;top:963.04px;font-size:27px;line-height:31px;color:#4a4a4a;font-weight:normal;">Да</div>
<div class="abs" style="left:1825px;top:949px;width:143px;height:59px;border:1px solid #f7c41a"></div>
<div class="ybtn" style="left:1828px;top:952px;width:137px;height:51px"></div>
<div class="t" style="left:1873.50px;top:961.84px;font-size:27px;line-height:31px;color:#3c3c3c;font-weight:bold;">Нет</div>
</body></html>
